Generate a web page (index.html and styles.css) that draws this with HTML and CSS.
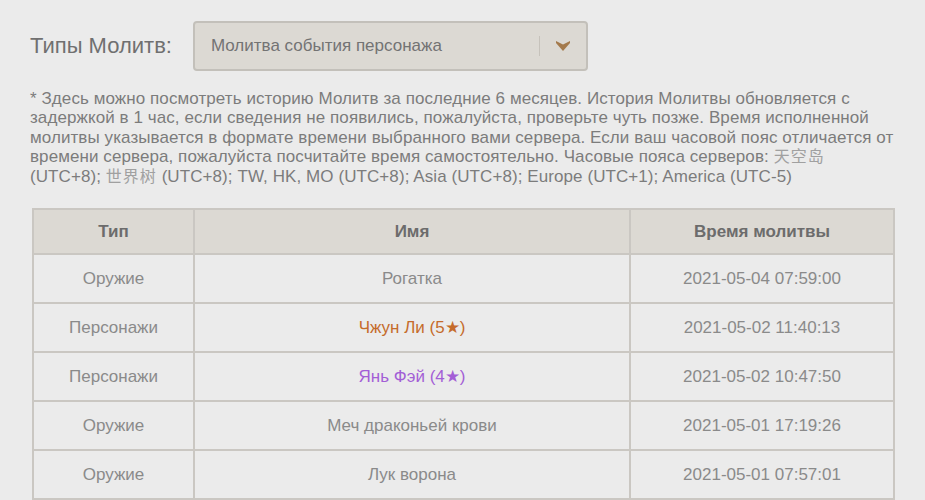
FILE: index.html
```html
<!DOCTYPE html>
<html lang="ru">
<head>
<meta charset="utf-8">
<link rel="stylesheet" href="styles.css">
</head>
<body>
<div class="page">
  <div class="filter">
    <span class="filter-label">Типы Молитв:</span>
    <div class="select">
      <span class="select-value">Молитва события персонажа</span>
      <span class="select-sep"></span>
      <svg class="select-arrow" width="14" height="10" viewBox="0 0 14 10"><path d="M0 0 L7 3.5 L14 0 L14 2 L7 10 L0 2 Z" fill="#a47a4c"/></svg>
    </div>
  </div>
  <p class="note">* Здесь можно посмотреть историю Молитв за последние 6 месяцев. История Молитвы обновляется с задержкой в 1 час, если сведения не появились, пожалуйста, проверьте чуть позже. Время исполненной молитвы указывается в формате времени выбранного вами сервера. Если ваш часовой пояс отличается от времени сервера, пожалуйста посчитайте время самостоятельно. Часовые пояса серверов: <span class="cjk">天空岛</span><br>(UTC+8); <span class="cjk">世界树</span> (UTC+8); TW, HK, MO (UTC+8); Asia (UTC+8); Europe (UTC+1); America (UTC-5)</p>
  <table class="log">
    <colgroup><col class="c1"><col class="c2"><col class="c3"></colgroup>
    <thead>
      <tr><th>Тип</th><th>Имя</th><th>Время молитвы</th></tr>
    </thead>
    <tbody>
      <tr><td>Оружие</td><td>Рогатка</td><td>2021-05-04 07:59:00</td></tr>
      <tr><td>Персонажи</td><td class="r5">Чжун Ли (5★)</td><td>2021-05-02 11:40:13</td></tr>
      <tr><td>Персонажи</td><td class="r4">Янь Фэй (4★)</td><td>2021-05-02 10:47:50</td></tr>
      <tr><td>Оружие</td><td>Меч драконьей крови</td><td>2021-05-01 17:19:26</td></tr>
      <tr><td>Оружие</td><td>Лук ворона</td><td>2021-05-01 07:57:01</td></tr>
    </tbody>
  </table>
</div>
</body>
</html>
```
FILE: styles.css
```css
html, body {
  margin: 0;
  padding: 0;
  background: #ebebeb;
}
body {
  font-family: "Liberation Sans", Arial, sans-serif;
  color: #7a7a7a;
}
.page {
  padding: 21px 0 0 30px;
  width: 868px;
}
.filter {
  display: flex;
  align-items: center;
  gap: 21px;
}
.filter-label {
  font-size: 22px;
  color: #707070;
}
.select {
  box-sizing: border-box;
  width: 395px;
  height: 50px;
  border: 2px solid #c3c0ba;
  border-radius: 4px;
  background: #dcd9d3;
  display: flex;
  align-items: center;
  padding: 0 16px 0 16px;
}
.select-value {
  flex: 1;
  font-size: 17px;
  color: #737373;
}
.select-sep {
  width: 1px;
  height: 20px;
  background: #c6c2bb;
  margin-right: 16px;
}
.select-arrow {
  display: block;
}
.note {
  margin: 18px 0 0 0;
  font-size: 17px;
  line-height: 19.4px;
  letter-spacing: 0.08px;
  color: #7c7c7c;
}
.cjk {
  font-family: "Noto Sans CJK SC", sans-serif;
  color: #a0a0a0;
  font-size: 16px;
  line-height: 1;
  letter-spacing: 1px;
}
.log {
  margin: 22px 0 0 2px;
  border-collapse: collapse;
  border: 2px solid #cac7c2;
  font-size: 17px;
  table-layout: fixed;
  width: 861px;
}
.c1 { width: 161px; }
.c2 { width: 436px; }
.c3 { width: 264px; }
.log th, .log td {
  border: 2px solid #cac7c2;
  text-align: center;
  padding: 0;
}
.log th {
  background: #dcd9d3;
  color: #6c6c6c;
  font-weight: bold;
  height: 43px;
}
.log td {
  height: 47px;
  color: #8a8a8a;
}
.log td.r5 { color: #c56b2b; }
.log td.r4 { color: #a35ed6; }
```
